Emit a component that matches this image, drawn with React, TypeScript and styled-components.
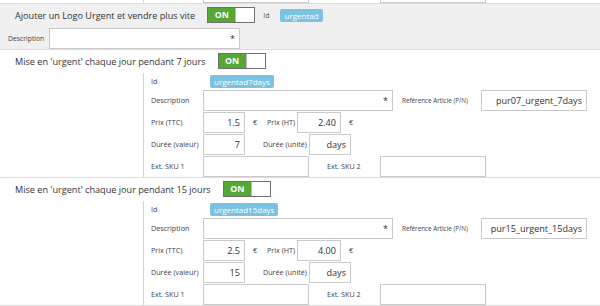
import styled, { createGlobalStyle } from 'styled-components';

const GlobalStyle = createGlobalStyle`
  body {
    margin: 0;
    background: #ffffff;
    font-family: "Open Sans", "Liberation Sans", sans-serif;
    color: #333;
  }
`;

type Pack = {
  title: string;
  id: string;
  ref: string;
  ttc: string;
  ht: string;
  days: string;
};

const packs: Pack[] = [
  { title: "Mise en 'urgent' chaque jour pendant 7 jours", id: 'urgentad7days', ref: 'pur07_urgent_7days', ttc: '1.5', ht: '2.40', days: '7' },
  { title: "Mise en 'urgent' chaque jour pendant 15 jours", id: 'urgentad15days', ref: 'pur15_urgent_15days', ttc: '2.5', ht: '4.00', days: '15' },
];

const Toggle = () => (
  <ToggleBox>
    <ToggleOn>ON</ToggleOn>
    <ToggleKnob />
  </ToggleBox>
);

// the tail of the block above only shows the input bottoms, so labels stay empty there
const SkuRow = ({ bare }: { bare?: boolean }) => (
  <Row>
    <Label>{bare ? '' : 'Ext. SKU 1'}</Label>
    <Input $w={106} readOnly />
    <SubLabel $ml={18} $w={53}>{bare ? '' : 'Ext. SKU 2'}</SubLabel>
    <Input $w={106} readOnly />
  </Row>
);

const PackSection = ({ pack }: { pack: Pack }) => (
  <Section>
    <Header>
      <Title>{pack.title}</Title>
      <Toggle />
    </Header>
    <Inner>
      <IdRow>
        <Label>Id</Label>
        <Badge $ml={7}>{pack.id}</Badge>
      </IdRow>
      <Row>
        <Label>Description</Label>
        <Input $w={190} placeholder="*" readOnly />
        <SubLabel $ml={9} $w={79} $small>Reférence Article (P/N)</SubLabel>
        <Input $w={106} value={pack.ref} readOnly />
      </Row>
      <Row>
        <Label>Prix (TTC)</Label>
        <Input $w={42} value={pack.ttc} readOnly />
        <Unit $w={22}>€</Unit>
        <SubLabel $w={30}>Prix (HT)</SubLabel>
        <Input $w={44} value={pack.ht} readOnly />
        <Unit $w={22}>€</Unit>
      </Row>
      <Row>
        <Label>Durée (valeur)</Label>
        <Input $w={42} value={pack.days} readOnly />
        <SubLabel $ml={18} $w={46}>Durée (unité)</SubLabel>
        <Input $w={42} value="days" readOnly />
      </Row>
      <SkuRow />
    </Inner>
  </Section>
);

const App = () => (
  <>
    <GlobalStyle />
    <Tail>
      <Inner>
        <SkuRow bare />
      </Inner>
    </Tail>
    <Section $grey>
      <Header>
        <Title>Ajouter un Logo Urgent et vendre plus vite</Title>
        <Toggle />
        <IdLabel>Id</IdLabel>
        <Badge>urgentad</Badge>
      </Header>
      <TopDesc>
        <DescLabel>Description</DescLabel>
        <Input $w={191} placeholder="*" readOnly />
      </TopDesc>
    </Section>
    {packs.map(p => (
      <PackSection key={p.id} pack={p} />
    ))}
  </>
);

const Tail = styled.div`
  height: 3px;
  overflow: hidden;
  display: flex;
  flex-direction: column;
  justify-content: flex-end;
  border-bottom: 1px solid #dcdcdc;
`;

const Section = styled.div<{ $grey?: boolean }>`
  background: ${p => (p.$grey ? '#f0f0f0' : '#ffffff')};
  border-bottom: 1px solid #dcdcdc;
`;

const Header = styled.div`
  display: flex;
  align-items: center;
  height: 16px;
  padding: 3px 0 4px 15px;
`;

const Title = styled.div`
  font-size: 9.15px;
  color: #333;
  margin-right: 12px;
  white-space: nowrap;
`;

const ToggleBox = styled.div`
  display: flex;
  width: 46px;
  height: 14px;
  border: 1px solid #707070;
`;

const ToggleOn = styled.div`
  width: 27px;
  background: #55a834;
  color: #fff;
  font-weight: 700;
  font-size: 8.8px;
  display: flex;
  align-items: center;
  justify-content: center;
`;

const ToggleKnob = styled.div`
  flex: 1;
  background: #fff;
  border-left: 1px solid #bbb;
`;

const IdLabel = styled.div`
  font-size: 7px;
  color: #555;
  margin: 0 11px 0 8px;
`;

const Badge = styled.div<{ $ml?: number }>`
  display: inline-flex;
  align-items: center;
  height: 13px;
  margin-left: ${p => p.$ml ?? 0}px;
  padding: 0 4px;
  border-radius: 2px;
  background: #79c2e2;
  color: #fff;
  font-size: 8px;
  white-space: nowrap;
`;

const TopDesc = styled.div`
  display: flex;
  align-items: center;
  height: 22px;
  padding-left: 8px;
`;

const DescLabel = styled.div`
  font-size: 6.8px;
  color: #444;
  width: 41px;
`;

const Inner = styled.div`
  margin-left: 143px;
  border-left: 1px solid #d4d4d4;
  padding-left: 7px;
`;

const IdRow = styled.div`
  display: flex;
  align-items: center;
  height: 16px;
`;

const Row = styled.div`
  display: flex;
  align-items: center;
  height: 22px;
`;

const Label = styled.div`
  width: 52px;
  flex-shrink: 0;
  font-size: 7.2px;
  color: #444;
  white-space: nowrap;
`;

const SubLabel = styled.div<{ $w: number; $ml?: number; $small?: boolean }>`
  width: ${p => p.$w}px;
  margin-left: ${p => p.$ml ?? 0}px;
  flex-shrink: 0;
  font-size: ${p => (p.$small ? '6.3px' : '7.2px')};
  color: #444;
  white-space: nowrap;
`;

const Input = styled.input<{ $w: number }>`
  box-sizing: border-box;
  width: ${p => p.$w}px;
  height: 21px;
  flex-shrink: 0;
  margin: 0;
  padding: 0 4px;
  border: 1px solid #cacaca;
  border-radius: 0;
  background: #fff;
  font-family: "Open Sans", "Liberation Sans", sans-serif;
  font-size: 9.1px;
  color: #333;
  text-align: right;
  outline: none;

  &::placeholder {
    color: #333;
    opacity: 1;
  }
`;

const Unit = styled.div<{ $w: number }>`
  width: ${p => p.$w}px;
  flex-shrink: 0;
  padding-left: 8px;
  box-sizing: border-box;
  font-size: 7.5px;
  color: #444;
`;

export default App;
